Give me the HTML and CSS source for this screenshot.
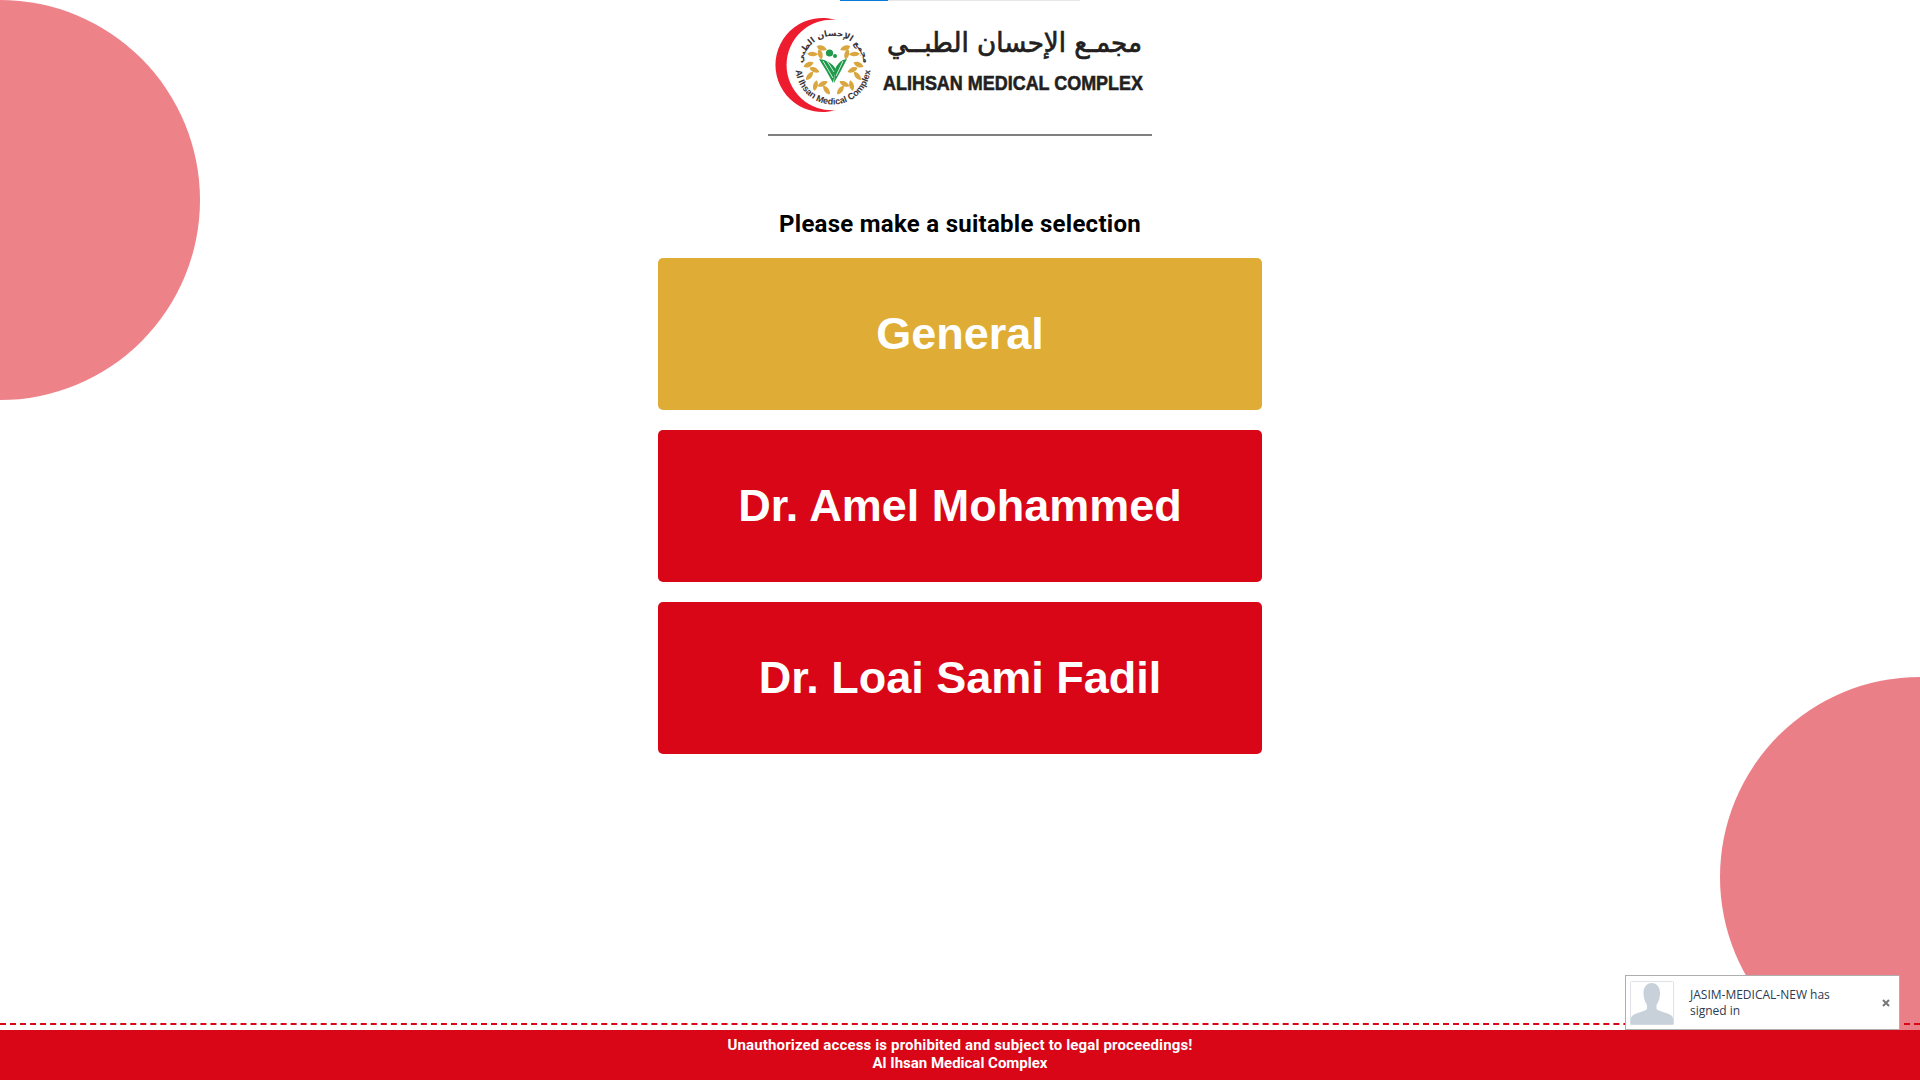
FILE: index.html
```html
<!DOCTYPE html>
<html lang="en">
<head>
<meta charset="utf-8">
<title>Al Ihsan Medical Complex</title>
<link rel="stylesheet" href="styles.css">
</head>
<body>
<div class="page">
  <div class="blob blob-top"></div>
  <div class="blob blob-bottom"></div>

  <main class="main">
    <div class="progress"><div class="progress-fill"></div></div>
    <svg class="logo" viewBox="768 10 384 124" width="384" height="124" aria-label="Al Ihsan Medical Complex logo">
      <defs>
        <path id="arc-en" d="M 795.500 67 A 37.5 37.5 0 0 0 870.5 67"/>
        <path id="arc-ar" d="M 802.4 72 A 31 31 0 1 1 863.6 72"/>
        <path id="leaf" class="leaf" d="M0 -5.6 C 3.2 -3 3 2.4 0 5.2 C -3 2.4 -3.2 -3 0 -5.6 Z"/>
      </defs>
      <path class="crescent" d="M836 20 A 47 47 0 1 0 836 110 A 45.2 45.2 0 1 1 836 20 Z"/>
      <text class="ring-en" text-anchor="middle"><textPath href="#arc-en" startOffset="50%">Al Ihsan Medical Complex</textPath></text>
      <text class="ring-ar" text-anchor="middle"><textPath href="#arc-ar" startOffset="50%">مجمع الإحسان الطبي</textPath></text>
      <g transform="translate(833.5 68)">
        <use href="#leaf" transform="rotate(-30) translate(0 -23) rotate(-40)"/>
        <use href="#leaf" transform="rotate(-56) translate(0 -25) rotate(-32)"/>
        <use href="#leaf" transform="rotate(-82) translate(0 -25) rotate(-32)"/>
        <use href="#leaf" transform="rotate(-108) translate(0 -25) rotate(-32)"/>
        <use href="#leaf" transform="rotate(-134) translate(0 -25) rotate(-32)"/>
        <use href="#leaf" transform="rotate(-162) translate(0 -23) rotate(-55)"/>
        <use href="#leaf" transform="rotate(-44) translate(0 -19) rotate(30)"/>
        <use href="#leaf" transform="rotate(-96) translate(0 -19) rotate(30)"/>
        <use href="#leaf" transform="rotate(-146) translate(0 -19) rotate(30)"/>
        <use href="#leaf" transform="rotate(30) translate(0 -23) rotate(40)"/>
        <use href="#leaf" transform="rotate(56) translate(0 -25) rotate(32)"/>
        <use href="#leaf" transform="rotate(82) translate(0 -25) rotate(32)"/>
        <use href="#leaf" transform="rotate(108) translate(0 -25) rotate(32)"/>
        <use href="#leaf" transform="rotate(134) translate(0 -25) rotate(32)"/>
        <use href="#leaf" transform="rotate(162) translate(0 -23) rotate(55)"/>
        <use href="#leaf" transform="rotate(44) translate(0 -19) rotate(-30)"/>
        <use href="#leaf" transform="rotate(96) translate(0 -19) rotate(-30)"/>
        <use href="#leaf" transform="rotate(146) translate(0 -19) rotate(-30)"/>
      </g>
      <circle class="figure" cx="829.5" cy="53" r="3.6"/>
      <circle class="figure" cx="835" cy="56" r="2"/>
      <path class="figure" d="M819 59 Q 830 60 836 69 L 833 83 Q 826 70 819 59 Z"/>
      <path class="figure" d="M847 59 Q 838 60 835 70 L 834 83 Q 841 71 847 59 Z"/>
      <path class="figure-cut" d="M823 61 L 833 78 M827 61 L 834 72 M843 61 L 836 76"/>
      <text class="logo-ar" x="1142" y="52" direction="rtl" textLength="255" lengthAdjust="spacingAndGlyphs">مجمـع الإحسان الطبــي</text>
      <text class="logo-en" x="883" y="90" textLength="260" lengthAdjust="spacingAndGlyphs">ALIHSAN MEDICAL COMPLEX</text>
    </svg>
    <hr class="rule">
    <h1 class="title">Please make a suitable selection</h1>
    <div class="choices">
      <a class="choice choice-gold">General</a>
      <a class="choice choice-red">Dr. Amel Mohammed</a>
      <a class="choice choice-red">Dr. Loai Sami Fadil</a>
    </div>
  </main>

  <footer class="footer">
    <div class="dash"></div>
    <div class="notice">
      <p class="notice-text notice-wide">Unauthorized access is prohibited and subject to legal proceedings!</p>
      <p class="notice-text">Al Ihsan Medical Complex</p>
    </div>
  </footer>

  <aside class="toast">
    <svg class="avatar" viewBox="0 0 44 44" width="44" height="44">
      <rect x="0.5" y="0.5" width="43" height="43" rx="1" class="avatar-bg"/>
      <path class="avatar-shape" d="M21.7 2 C 27 2 30 6.5 30 12 C 30 17 28.5 21 26.5 24 L 26.5 28 C 29 31 38 31.5 42 35 C 43.2 36.5 43.5 40 43.5 43.5 L 0.5 43.5 C 0.5 40 0.8 36.5 2 35 C 6 31.5 14.5 31 17 28 L 17 24 C 15 21 13.5 17 13.5 12 C 13.5 6.5 16.500 2 21.7 2 Z"/>
    </svg>
    <div class="toast-text">JASIM-MEDICAL-NEW has signed in</div>
    <svg class="toast-close" viewBox="0 0 8 8" width="8" height="8">
      <path d="M1 1 L7 7 M7 1 L1 7"/>
    </svg>
  </aside>
</div>
</body>
</html>
```
FILE: styles.css
```css
* { box-sizing: border-box; }
html, body { margin: 0; height: 100%; }
body { background: #fff; font-family: Roboto, "Noto Sans", sans-serif; }

.page {
  position: relative;
  height: 100vh;
  overflow: hidden;
  display: flex;
  flex-direction: column;
}

.blob { position: absolute; border-radius: 50%; }
.blob-top { width: 400px; height: 400px; left: -200px; top: 0; background: #ee8289; }
.blob-bottom { width: 400px; height: 400px; left: 1720px; top: 677px; background: #eb7f88; }

.main {
  position: relative;
  flex: 1;
  display: flex;
  flex-direction: column;
  align-items: center;
}

.progress { width: 240px; height: 1px; background: #e6e6e6; }
.progress-fill { width: 48px; height: 1px; background: #0a7bd6; }

.logo { display: block; margin-top: 9px; }
.crescent { fill: #ed1c2e; }
.ring-en { font-family: "Liberation Sans", sans-serif; font-weight: 700; font-size: 9px; fill: #3a3335; }
.ring-ar { font-family: "DejaVu Sans", sans-serif; font-weight: 700; font-size: 8.5px; fill: #3a3335; }
.leaf { fill: #d9a63f; }
.figure { fill: #1f9a4a; }
.figure-cut { fill: none; stroke: #fff; stroke-width: 0.8; }
.logo-ar { font-family: "DejaVu Sans", sans-serif; font-size: 27px; fill: #231f20; stroke: #231f20; stroke-width: 0.7px; }
.logo-en { font-family: "Liberation Sans", sans-serif; font-weight: 700; font-size: 21px; fill: #231f20; stroke: #231f20; stroke-width: 0.6px; }

.rule { width: 384px; height: 2px; margin: 0; border: 0; background: #808080; }

.title {
  margin: 72px 0 18px;
  font-size: 24px;
  line-height: 32px;
  font-weight: 700;
  letter-spacing: 0.27px;
  color: #000;
}

.choices { display: flex; flex-direction: column; gap: 20px; width: 604px; }
.choice {
  height: 152px;
  border-radius: 5px;
  display: flex;
  align-items: center;
  justify-content: center;
  font-family: "Liberation Sans", Arial, sans-serif;
  font-weight: 700;
  font-size: 45px;
  color: #fff;
}
.choice-gold { background: #dfad36; }
.choice-red { background: #d90617; }

.footer { position: relative; flex: none; }
.dash { height: 2px; border-top: 2px dashed #d90617; margin-bottom: 5px; }
.notice {
  height: 50px;
  padding-top: 6px;
  background: #d90617;
  text-align: center;
}
.notice-text {
  margin: 0;
  color: #fff;
  font-weight: 700;
  font-size: 15px;
  line-height: 18px;
}
.notice-wide { letter-spacing: 0.15px; }

.toast {
  position: absolute;
  left: 1625px;
  top: 975px;
  width: 275px;
  height: 55px;
  display: flex;
  align-items: center;
  background: #fff;
  border: 1px solid #aeaeae;
  padding: 0 9px 0 4px;
}
.avatar { flex: none; display: block; }
.avatar-bg { fill: #fff; stroke: #dfe3e8; }
.avatar-shape { fill: #c8d0da; }
.toast-text {
  flex: 1;
  margin-left: 16px;
  padding-right: 40px;
  font-family: "Open Sans", sans-serif;
  font-size: 12px;
  line-height: 16px;
  color: #2b3a52;
}
.toast-close { flex: none; display: block; }
.toast-close path { fill: none; stroke: #777; stroke-width: 2; }
```
